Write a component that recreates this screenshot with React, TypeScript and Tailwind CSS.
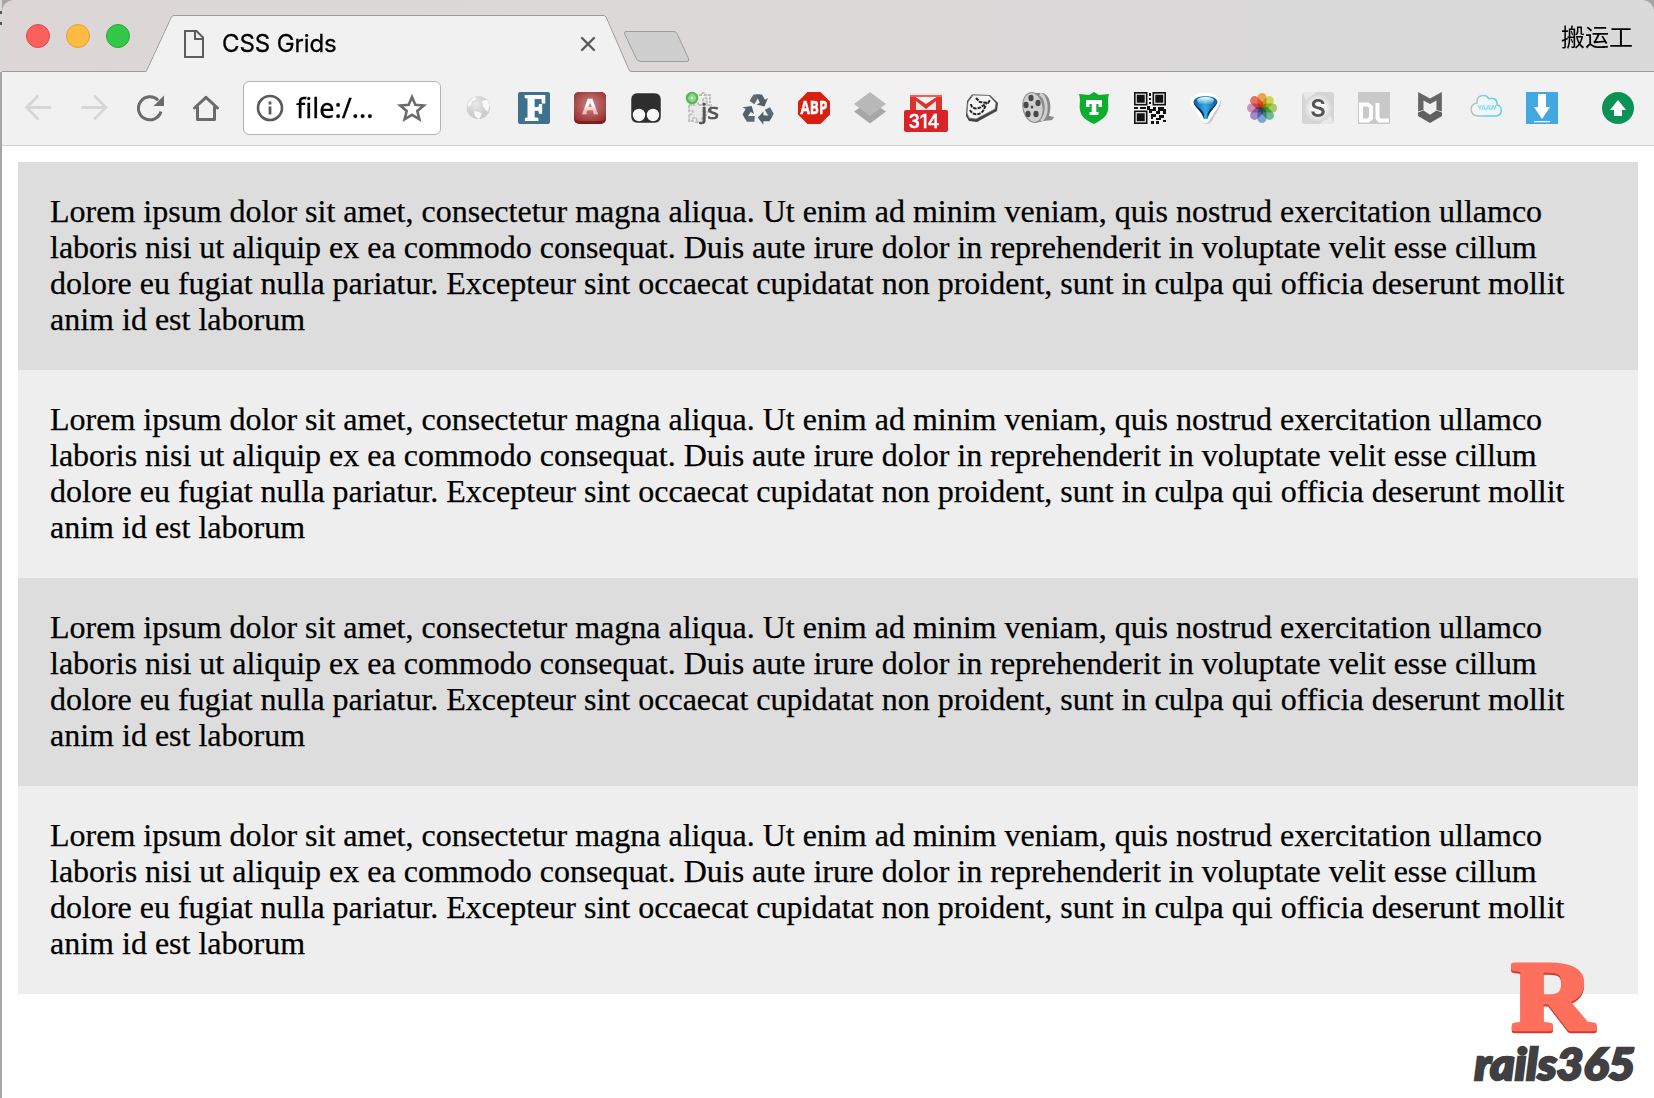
import type { ReactNode } from "react";

const LOREM =
  "Lorem ipsum dolor sit amet, consectetur magna aliqua. Ut enim ad minim veniam, quis nostrud exercitation ullamco laboris nisi ut aliquip ex ea commodo consequat. Duis aute irure dolor in reprehenderit in voluptate velit esse cillum dolore eu fugiat nulla pariatur. Excepteur sint occaecat cupidatat non proident, sunt in culpa qui officia deserunt mollit anim id est laborum";

function Icon({ children }: { children: ReactNode }) {
  return (
    <svg viewBox="0 0 32 32" className="size-8 shrink-0 overflow-visible">
      {children}
    </svg>
  );
}

function NavIcons() {
  return (
    <>
      <Icon>
        <path d="M28 15.5H5M15.5 4.5 4.5 15.5 15.5 26.5" fill="none" stroke="#d6d6d6" strokeWidth="2.8" strokeLinecap="round" />
      </Icon>
      <Icon>
        <path d="M4.500 15.5H27M17 4.500 28 15.500 17 26.500" fill="none" stroke="#d6d6d6" strokeWidth="2.8" strokeLinecap="round" />
      </Icon>
      <Icon>
        <path d="M24.200 8.300A11.500 11.500 0 1 0 27 19.500" fill="none" stroke="#6b6b6b" strokeWidth="3" />
        <path d="M30 3.500V14H19.500Z" fill="#6b6b6b" />
      </Icon>
      <Icon>
        <path d="M4.500 16 16 5.300 27.500 16M7.500 15V27.500H24.500V15" fill="none" stroke="#6b6b6b" strokeWidth="3" strokeLinecap="round" strokeLinejoin="round" />
      </Icon>
    </>
  );
}

function RecycleArrow({ angle }: { angle: number }) {
  return (
    <g transform={`rotate(${angle} 16 18)`}>
      <path d="M7.500 9 11.500 2.500H18L12.500 12.200Z" fill="#5d6a76" />
      <path d="M14 2.500H20L23 7.800 26 6 22.500 14.500 14.500 12.500 17.800 10.700Z" fill="#53606c" />
    </g>
  );
}

const PETALS: [number, string][] = [
  [0, "#f7a13a"],
  [45, "#d9dc3c"],
  [90, "#9fce4e"],
  [135, "#5dbb88"],
  [180, "#6ba3d8"],
  [225, "#9a82c8"],
  [270, "#d58bbb"],
  [315, "#f2605a"],
];

const FINDERS = [
  [0, 0],
  [18.5, 0],
  [0, 18.5],
];

function Extensions() {
  return (
    <>
      <Icon>
        <defs>
          <radialGradient id="globe" cx=".4" cy=".35">
            <stop offset="0" stopColor="#e8e8e8" />
            <stop offset="1" stopColor="#cdcdcd" />
          </radialGradient>
        </defs>
        <circle cx="16.300" cy="15.500" r="11.600" fill="url(#globe)" />
        <path d="M8 9 12 5 14.500 6 13 8 10 9 9 13 6 15 5.500 12ZM20 9 25 7.500 27.500 13 26 20 23 17 21 14ZM12 19 17 20 20 22 17 27 13 24Z" fill="#f9f9f9" />
      </Icon>
      <Icon>
        <rect width="32" height="32" rx="2" fill="#3f718d" />
        <text x="17.500" y="28" textAnchor="middle" className="font-['Liberation_Serif'] text-[35px] font-bold" fill="#fff" stroke="#fff" strokeWidth="1.800" textLength="21" lengthAdjust="spacingAndGlyphs">F</text>
      </Icon>
      <Icon>
        <defs>
          <radialGradient id="crimson" cx=".5" cy=".45" r=".65">
            <stop offset="0" stopColor="#c98585" />
            <stop offset="1" stopColor="#9c3232" />
          </radialGradient>
          <linearGradient id="letter" x1="0" y1="0" x2="0" y2="1">
            <stop offset=".5" stopColor="#fff" />
            <stop offset=".7" stopColor="#f8b9b9" />
          </linearGradient>
        </defs>
        <rect width="32" height="32" rx="5" fill="#7c1f1f" />
        <rect width="32" height="29" rx="5" fill="url(#crimson)" />
        <text x="16" y="22" textAnchor="middle" className="font-['Open_Sans'] text-[22px] font-bold" fill="url(#letter)" stroke="url(#letter)" strokeWidth=".5">A</text>
      </Icon>
      <Icon>
        <rect x="1" y="1" width="30" height="30" rx="6" fill="#2e2e2e" stroke="#fff" strokeOpacity=".7" strokeWidth=".7" />
        <circle cx="9" cy="23" r="6.200" fill="#f8f8f8" />
        <circle cx="23" cy="23" r="6.200" fill="#f8f8f8" />
      </Icon>
      <Icon>
        <path d="M3 13H8C6 8 14 8 12 13H17V9C16 5 22 5 21 9V13H25V20H18C22 23 20 27 16 25V30H10C13 25 5 24 7 29H3V22C8 24 8 16 3 19Z" fill="#e9e9e9" stroke="#bdbdbd" strokeWidth="1.800" strokeDasharray="3 1" />
        <path d="M10 8V3H16C15 0 20 0 19 3H24V11" fill="none" stroke="#bababa" strokeWidth="1.900" strokeDasharray="3 1" />
        <circle cx="6" cy="6" r="5" fill="#b8ecb8" stroke="#56b956" strokeWidth="2.600" />
        <rect x="4" y="4" width="4" height="4" fill="#e5ffe5" stroke="#62bd62" />
        <text x="15" y="27" className="font-['Open_Sans'] text-[21px]" fill="#505050" stroke="#505050" strokeWidth=".7" textLength="18" lengthAdjust="spacingAndGlyphs">js</text>
      </Icon>
      <Icon>
        <RecycleArrow angle={0} />
        <RecycleArrow angle={120} />
        <RecycleArrow angle={240} />
      </Icon>
      <Icon>
        <path d="M9.500 0H22.500L32 9.500V22.500L22.500 32H9.500L0 22.500V9.500Z" fill="#d7200f" />
        <text x="16" y="21.700" textAnchor="middle" className="font-['Open_Sans'] text-[17px] font-bold" fill="#fff" stroke="#fff" strokeWidth=".4" textLength="27" lengthAdjust="spacingAndGlyphs">ABP</text>
      </Icon>
      <Icon>
        <path d="M0 19.500 6 15.500H26L32 19.500 16 31.500Z" fill="#a7a7a7" />
        <path d="M0 12 16 0 32 12 16 24Z" fill="#b9b9b9" />
      </Icon>
      <Icon>
        <rect y="1" width="32" height="20" fill="#f1e4e4" />
        <path d="M0 3H32V18H26V9L16 17 6 9V18H0Z" fill="#dc342d" />
        <path d="M4 4H28L16 12Z" fill="#f7f3f3" />
        <path d="M0 3H32V5H0Z" fill="#e8625a" />
        <rect x="-6" y="18" width="44" height="22" rx="2" fill="#d9232b" />
        <text x="14" y="35.800" textAnchor="middle" className="font-['Inter'] text-[19px] font-medium" fill="#fff" stroke="#fff" strokeWidth=".5" textLength="31" lengthAdjust="spacingAndGlyphs">314</text>
      </Icon>
      <Icon>
        <path d="M1 9 6 2.500 24 3 32 11 31 19 11 30 3 29 0 24Z" fill="#444" strokeLinejoin="round" />
        <path d="M2 10 7 3 23 3.500 30 11 29 17 10 27 3 26 1 21Z" fill="#f6f6f6" stroke="#777" strokeWidth=".8" strokeLinejoin="round" />
        <path d="M10 6 14 10 22 11 24 8M5 12C5 16 10 18 15 15L21 11M4 18C6 23 13 24 17 19L20 13" fill="none" stroke="#222" strokeWidth="2" strokeDasharray="3.500 1" />
      </Icon>
      <Icon>
        <path d="M13 1 21 1C28 3 30 14 27 24L32 25 30 28 22 29 13 31Z" fill="#898989" />
        <path d="M18 2C25 5 27 22 19 29" fill="none" stroke="#cfcfcf" strokeWidth="3" />
        <ellipse cx="11" cy="15.500" rx="10" ry="15" transform="rotate(-10 11 15.500)" fill="#d0d0d0" stroke="#8b8b8b" />
        {[[9, 6], [16, 11], [14, 22], [6, 22], [4, 13], [10, 15]].map(([x, y], i) => (
          <ellipse key={x} cx={x} cy={y} rx={i === 5 ? 1.4 : 2.6} ry={i === 5 ? 1.6 : 3.2} fill="#484848" />
        ))}
      </Icon>
      <Icon>
        <path d="M16 0 21 3 31 2C29 8 31 13 30 18C29 25 22 29 16 32C9 29 3 25 2 18C1 13 3 8 1 2L11 3Z" fill="#0cae2c" />
        <path d="M8 8H24V15H20.500V12H18.300V20H20.500V23H11.500V20H13.700V12H11.500V15H8Z" fill="#fff" />
      </Icon>
      <Icon>
        {FINDERS.map(([x, y]) => (
          <g key={`${x}-${y}`} transform={`translate(${x} ${y})`}>
            <rect width="13.500" height="13.500" fill="#111" />
            <rect x="2.200" y="2.200" width="9.100" height="9.100" fill="none" stroke="#e4e4e4" strokeWidth="1.200" />
          </g>
        ))}
        <path d="M15 1H17V4H15ZM15 6H17V8H15ZM15 10H17V12H15ZM0 15H4V17H0ZM6 15H12V17H6ZM13 14H16V17H19V15H22V19H18V21H15V18H13ZM24 15H30V17H32V22H29V19H26V22H22V19H24ZM17 22H22V25H19V27H17ZM25 23H30V26H27V28H22V26H25ZM17 29H20V32H17ZM22 29H25V32H22ZM29 28H32V30H29Z" fill="#111" />
      </Icon>
      <Icon>
        <defs>
          <linearGradient id="balloon">
            <stop offset="0" stopColor="#0a5ea5" />
            <stop offset=".5" stopColor="#35a8e4" />
            <stop offset="1" stopColor="#06569a" />
          </linearGradient>
          <linearGradient id="shine" x1="0" y1="0" x2="0" y2="1">
            <stop offset="0" stopColor="#fff" />
            <stop offset="1" stopColor="#fff" stopOpacity=".1" />
          </linearGradient>
        </defs>
        <path d="M3 7C8 1 24 1 30 7C34 13 25 21 22 29C19 33 14 33 12 29C8 20-1 13 3 7Z" fill="#c7c7c7" />
        <path d="M1 6C7-1 24-1 29 6C33 12 24 20 20 28C18 32 13 32 11 28C7 19-3 12 1 6Z" fill="#fff" />
        <path d="M3.500 10C4 2 27 2 27.500 10C26.500 14 19 19 17.500 27H14C13 19 4 15 3.500 10Z" fill="url(#balloon)" />
        <path d="M7 8C9 4 22 4 24 8L22 12H9Z" fill="url(#shine)" />
        <path d="M3.500 10C6 14 12 17 14 22V27C12 19 4 15 3.500 10ZM27.500 10C25 14 19 17 17.500 22V27C19 19 26 15 27.500 10Z" fill="#07335e" />
      </Icon>
      <Icon>
        {PETALS.map(([angle, color]) => (
          <rect key={angle} x="11.500" y="1" width="9" height="15" rx="4.500" fill={color} opacity=".86" transform={`rotate(${angle} 16 16)`} className="mix-blend-multiply" />
        ))}
      </Icon>
      <Icon>
        <defs>
          <radialGradient id="halo">
            <stop offset=".4" stopColor="#fafafa" />
            <stop offset="1" stopColor="#d5d5d5" />
          </radialGradient>
        </defs>
        <rect width="32" height="32" rx="3" fill="#d5d5d5" />
        <path d="M0 0H14L6 12ZM32 32H18L27 20Z" fill="#e8e8e8" />
        <circle cx="16" cy="16" r="14" fill="url(#halo)" />
        <text x="16" y="24.500" textAnchor="middle" className="font-['Inter'] text-[24px] font-semibold" fill="#565656">S</text>
      </Icon>
      <Icon>
        <rect width="32" height="32" fill="#c9c9c9" />
        <path d="M3 12.500H10L13 15V26L10 28.500H3ZM19.500 11V26L21.500 28.500H31" fill="none" stroke="#fff" strokeWidth="4" />
      </Icon>
      <Icon>
        <path d="M5 0 16 6.500 27 0V19.500L22 18V8.500L16 12 10 8.500V18L5 19.500Z" fill="#666" transform="translate(-1.300 0) scale(1.080 1)" />
        <path d="M4 20.500 9.500 18.500 16 22.800 22.500 18.500 28 20.500V24L16 31 4 24Z" fill="#606060" />
      </Icon>
      <Icon>
        <defs>
          <linearGradient id="cloud" x1="0" y1="0" x2="1" y2="0">
            <stop offset=".15" stopColor="#b8bfc1" />
            <stop offset=".7" stopColor="#5bd0f2" />
          </linearGradient>
        </defs>
        <path d="M8 24H25C33 24 33 14 27 13C28 7 22 5 19 7C16 1 6 3 7 11C-1 12-1 23 8 24Z" fill="#f1f6f8" stroke="url(#cloud)" strokeWidth="1.500" />
        <text x="17" y="18" textAnchor="middle" className="font-['Inter'] text-[6.500px] font-bold" fill="#82d8f3" textLength="19">YAAW</text>
      </Icon>
      <Icon>
        <rect width="32" height="32" fill="#42a8df" />
        <path d="M12 2H20V15H24L16 27 8 15H12ZM8 29H24V30.300H8Z" fill="#fff" />
      </Icon>
    </>
  );
}

function TitleBar() {
  return (
    <header className="relative flex h-[72px] items-start rounded-t-xl bg-linear-to-r from-[#dcd7d6] to-[#dadada]">
      <svg viewBox="0 0 1652 72" className="absolute inset-0 h-[72px] w-[1652px]">
        <path d="M0 71.500H143.500Q144.500 71.500 145 70L169.500 17Q170.500 15.500 172 15.500H601Q603 15.500 604 17L627 70Q628 71.500 630 71.500H1652V73H0Z" fill="none" stroke="#999" />
        <path d="M144.500 72 145.500 70 170 17Q171 16 172 16H601Q603 16 603.500 17L626.500 70 628 72Z" fill="#f1f1f1" />
        <path d="M624 31.500H672Q674 31.500 675 33.500L686.500 58.500Q687.500 61.500 685 61.500H639Q636 61.500 634.500 59L622.500 33.500Q622 31.500 624 31.500Z" fill="#cfcfcf" stroke="#9c9c9c" />
      </svg>
      <div className="relative mt-6 ml-6 flex gap-4">
        <span className="size-6 rounded-full border border-[#e64845] bg-[#fc605c]" />
        <span className="size-6 rounded-full border border-[#e0a03a] bg-[#fdbc40]" />
        <span className="size-6 rounded-full border border-[#27aa35] bg-[#34c84a]" />
      </div>
      <div className="relative mt-[26px] ml-[50px] flex items-center">
        <svg viewBox="0 0 28 36" className="h-9 w-7">
          <path d="M5 5H16.500L23 11.500V31H5ZM15 5V13H23" fill="none" stroke="#5c5c5c" strokeWidth="2" />
        </svg>
        <span className="ml-3.5 w-[354px] font-['Inter',sans-serif] text-[24px] leading-9 tracking-[-0.1px] text-black [-webkit-text-stroke:0.3px_#000]">CSS Grids</span>
        <svg viewBox="0 0 24 24" className="size-6">
          <path d="m6 6 12 12M18 6 6 18" fill="none" stroke="#5a5a5a" strokeWidth="2.400" strokeLinecap="round" />
        </svg>
      </div>
      <span className="relative mt-[18px] mr-[21px] ml-auto font-['Noto_Sans_CJK_SC',sans-serif] text-[24px] leading-9 text-black">搬运工</span>
    </header>
  );
}

function Toolbar() {
  return (
    <nav className="flex h-[74px] items-start border-b border-[#cfcfcf] bg-[#f1f1f1] pt-[9px]">
      <div className="mt-[11px] ml-5 flex gap-6">
        <NavIcons />
      </div>
      <div className="ml-[21px] flex h-[54px] w-[198px] shrink-0 items-center rounded-md border border-[#b3b3b3] bg-white">
        <svg viewBox="0 0 28 28" className="ml-[12px] size-7">
          <circle cx="14" cy="14" r="12" fill="none" stroke="#5a5a5a" strokeWidth="2.600" />
          <path d="M14 12.500V20.500M14 7.500V10.500" stroke="#5a5a5a" strokeWidth="2.800" />
        </svg>
        <span className="ml-[12px] w-[88px] font-['Noto_Sans',sans-serif] text-[27px] leading-8 text-black [-webkit-text-stroke:0.3px_#000]">file:/...</span>
        <svg viewBox="0 0 32 32" className="ml-[12px] size-8 shrink-0">
          <path d="M16 5 19.300 12.800 27.800 13.500 21.300 19 23.400 27.300 16 22.800 8.600 27.300 10.700 19 4.200 13.500 12.700 12.800Z" fill="none" stroke="#6b6b6b" strokeWidth="2.600" />
        </svg>
      </div>
      <div className="mt-[11px] ml-[21px] flex gap-6">
        <Extensions />
      </div>
      <div className="mt-[11px] mr-5 ml-auto">
        <Icon>
          <circle cx="16" cy="16" r="16" fill="#0c9159" />
          <path d="M16 8 24 18H20V24H12V18H8Z" fill="#fff" />
        </Icon>
      </div>
    </nav>
  );
}

function Watermark() {
  return (
    <div className="absolute right-4 bottom-2 flex w-[170px] flex-col">
      <svg viewBox="0 0 170 80" className="h-20 w-[170px] overflow-visible drop-shadow-[0_2px_0_#c93f35]">
        <text x="44" y="68.500" className="font-['Liberation_Serif'] text-[97px] font-bold" fill="#ff705c" stroke="#ff705c" strokeWidth="5" strokeLinejoin="round" textLength="81" lengthAdjust="spacingAndGlyphs">R</text>
      </svg>
      <svg viewBox="0 0 170 50" className="h-[50px] w-[170px] overflow-visible">
        <text x="6.500" y="39.500" className="font-['Lato'] text-[43px] font-black italic" fill="#404042" stroke="#404042" strokeWidth="2.500" textLength="160.500" lengthAdjust="spacingAndGlyphs">rails365</text>
      </svg>
    </div>
  );
}

export default function App() {
  return (
    <div className="relative h-[1098px] w-[1654px] overflow-hidden bg-[#a6a6a6] pl-[2px]">
      <div className="absolute top-0 left-0 h-[72px] w-[2px] bg-[#d8d8d8]">
        <div className="mt-[11px] h-[3px] bg-[#555]" />
        <div className="mt-[8px] h-[3px] bg-[#555]" />
      </div>
      <div className="flex h-full flex-col">
        <TitleBar />
        <Toolbar />
        <main className="flex-1 bg-white p-4 font-['Liberation_Serif',serif] text-[32px] leading-9 text-black [-webkit-text-stroke:0.25px_#000]">
          {[0, 1, 2, 3].map((i) => (
            <p key={i} className="h-[208px] w-[1620px] px-8 pt-[31px] pb-8 odd:bg-[#dddddd] even:bg-[#eeeeee]">
              {LOREM}
            </p>
          ))}
        </main>
      </div>
      <Watermark />
    </div>
  );
}
